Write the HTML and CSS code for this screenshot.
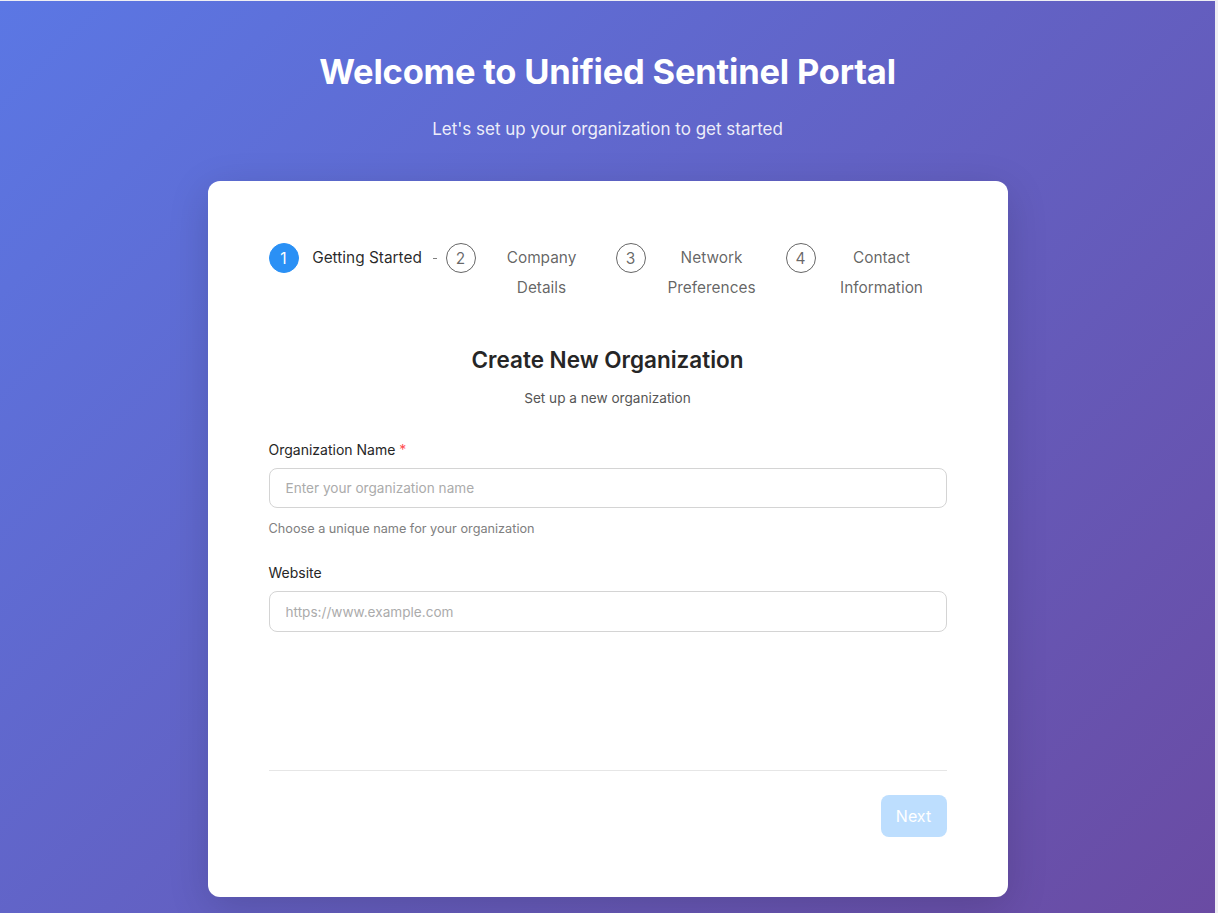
FILE: index.html
```html
<!DOCTYPE html>
<html lang="en">
<head>
<meta charset="utf-8">
<title>Unified Sentinel Portal</title>
<link rel="stylesheet" href="styles.css">
</head>
<body>
<div class="page">
  <header class="hero">
    <h1 class="hero-title">Welcome to Unified Sentinel Portal</h1>
    <p class="hero-sub">Let's set up your organization to get started</p>
  </header>
  <main class="card">
    <div class="steps">
      <div class="step step-active">
        <span class="step-icon">1</span>
        <span class="step-title">Getting Started</span>
        <span class="step-tail"></span>
      </div>
      <div class="step">
        <span class="step-icon">2</span>
        <span class="step-title">Company Details</span>
      </div>
      <div class="step">
        <span class="step-icon">3</span>
        <span class="step-title">Network Preferences</span>
      </div>
      <div class="step">
        <span class="step-icon">4</span>
        <span class="step-title">Contact Information</span>
      </div>
    </div>

    <section class="form-head">
      <h2 class="form-title">Create New Organization</h2>
      <p class="form-sub">Set up a new organization</p>
    </section>

    <form class="form">
      <div class="field">
        <label class="label">Organization Name <span class="req">*</span></label>
        <input class="input" type="text" placeholder="Enter your organization name">
        <div class="help">Choose a unique name for your organization</div>
      </div>
      <div class="field">
        <label class="label">Website</label>
        <input class="input input-tall" type="text" placeholder="https://www.example.com">
      </div>
    </form>

    <div class="footer">
      <button class="btn-next" type="button" disabled>Next</button>
    </div>
  </main>
</div>
</body>
</html>
```
FILE: styles.css
```css
* { box-sizing: border-box; }
html, body { margin: 0; padding: 0; }
body {
  font-family: Inter, "Noto Sans", sans-serif;
  background: #eeeef3;
  color: rgba(0,0,0,0.88);
  padding: 1px 3px 0 0;
}
.page {
  min-height: 912px;
  background: linear-gradient(135deg, #5b77e4 0%, #6a4ba3 100%);
  display: flex;
  flex-direction: column;
  align-items: center;
  padding-top: 49px;
}
.hero { text-align: center; color: #fff; }
.hero-title {
  margin: 0;
  font-size: 34.5px;
  line-height: 44px;
  font-weight: 700;
  letter-spacing: -0.2px;
}
.hero-sub {
  margin: 23px 0 0;
  font-size: 17px;
  line-height: 24px;
  color: rgba(255,255,255,0.9);
}
.card {
  margin-top: 40px;
  width: 800px;
  height: 716px;
  background: #fff;
  border-radius: 12px;
  padding: 62px 61px 0;
  box-shadow: 0 10px 40px rgba(0,0,0,0.15);
  display: flex;
  flex-direction: column;
}
.steps { display: flex; align-items: flex-start; }
.step { display: flex; align-items: flex-start; margin-right: 16px; }
.step:last-child { margin-right: 0; }
.step-icon {
  flex: none;
  width: 30px;
  height: 30px;
  border-radius: 50%;
  border: 1px solid rgba(0,0,0,0.6);
  color: rgba(0,0,0,0.6);
  display: flex;
  align-items: center;
  justify-content: center;
  font-size: 15.5px;
}
.step-active .step-icon {
  background: #2a90f5;
  border-color: #2a90f5;
  color: #fff;
}
.step-title {
  width: 116px;
  margin-left: 8px;
  text-align: center;
  font-size: 15.4px;
  line-height: 30px;
  color: rgba(0,0,0,0.62);
}
.step-active .step-title { color: rgba(0,0,0,0.85); padding-left: 5px; }
.step-active { margin-right: 0; }
.step-tail {
  width: 4px;
  height: 1px;
  margin: 15px 9px 0 10px;
  background: rgba(0,0,0,0.5);
}
.form-head { text-align: center; margin-top: 41px; }
.form-title {
  margin: 0;
  font-size: 22.5px;
  line-height: 32px;
  font-weight: 600;
  color: #262626;
}
.form-sub {
  margin: 12px 0 0;
  font-size: 13.6px;
  line-height: 20px;
  color: #555;
}
.form { margin-top: 31px; display: flex; flex-direction: column; gap: 23px; }
.field { display: flex; flex-direction: column; }
.label {
  font-size: 14px;
  line-height: 22px;
  color: #262626;
  margin-bottom: 7px;
}
.req { color: #ff4d4f; }
.input {
  height: 40px;
  width: 100%;
  border: 1px solid #d4d4d4;
  border-radius: 8px;
  padding: 0 16px;
  font: inherit;
  font-size: 13.6px;
  color: #262626;
  outline: none;
}
.input::placeholder { color: #ababab; }
.input-tall { height: 41px; }
.help {
  margin-top: 11px;
  font-size: 12.7px;
  line-height: 20px;
  color: #808080;
}
.footer {
  margin-top: auto;
  margin-bottom: 60px;
  border-top: 1px solid #e6e6e6;
  padding-top: 24px;
  display: flex;
  justify-content: flex-end;
}
.btn-next {
  width: 66px;
  height: 42px;
  border: none;
  border-radius: 8px;
  background: #bddefe;
  color: #fff;
  font: inherit;
  font-size: 16px;
}
```
